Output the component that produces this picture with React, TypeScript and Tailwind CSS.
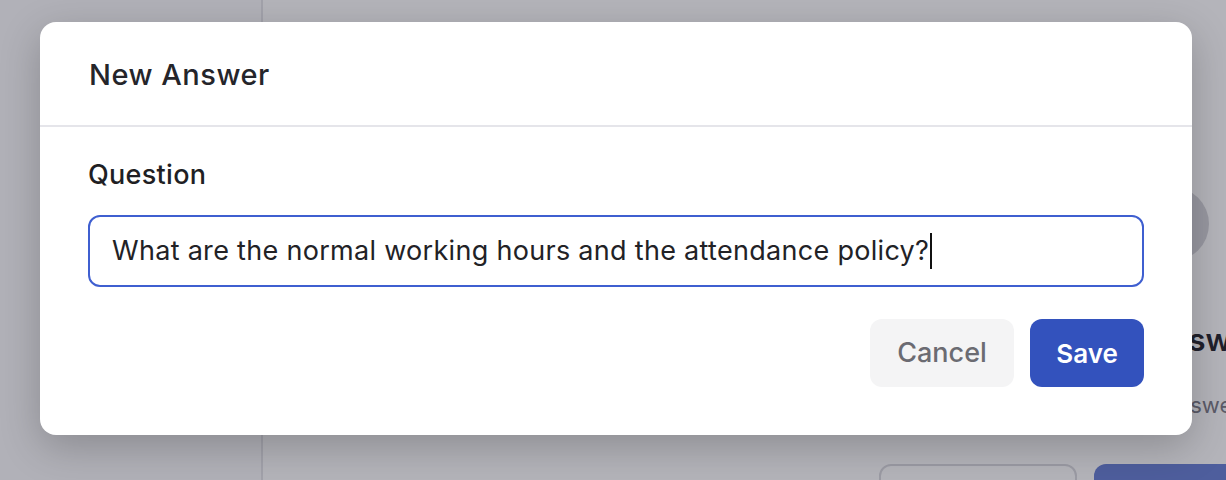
import React from 'react';

const font = { fontFamily: 'Inter, "Noto Sans", sans-serif' };

const BackgroundPage = () => (
  <div className="flex h-[480px] w-full bg-white">
    <aside className="w-[263px] shrink-0 border-r-2 border-[#e6e6ea] bg-[#fbfbfc]" />
    <main className="flex flex-1 flex-col pl-[616px] pt-[187px]">
      <div className="ml-[256px] h-[74px] w-[74px] shrink-0 rounded-full bg-[#d7d7dc]" />
      <h2 className="ml-[268px] mt-[59px] shrink-0 whitespace-nowrap text-[31px] font-semibold leading-[40px] text-[#2b2b33]">
        Answers
      </h2>
      <p className="ml-[283px] mt-[30px] shrink-0 whitespace-nowrap text-[22px] leading-[30px] text-[#80808a]">
        Answers appear here
      </p>
      <div className="mt-[44px] flex shrink-0 gap-[17px]">
        <div className="h-[56px] w-[198px] rounded-[12px] border-2 border-[#dcdce0] bg-white" />
        <div className="h-[56px] w-[200px] rounded-[12px] bg-[#6e84d6]" />
      </div>
    </main>
  </div>
);

export default function App() {
  return (
    <div className="relative h-[480px] w-[1226px] overflow-hidden" style={font}>
      <BackgroundPage />

      <div className="absolute inset-0 bg-[rgba(8,6,26,0.3)]" />

      <div className="absolute left-[40px] top-[22px] w-[1152px] overflow-hidden rounded-[16px] bg-white shadow-[0_12px_40px_rgba(0,0,0,0.22)]">
        <div className="flex h-[105px] items-center border-b-2 border-[#e5e5ea] px-[49px] pt-[3px]">
          <h1 className="text-[29px] font-medium tracking-[0.5px] text-[#25252a]">New Answer</h1>
        </div>

        <div className="px-[48px] pb-[48px] pt-[31px]">
          <label className="block text-[27px] font-medium leading-[34px] tracking-[0.3px] text-[#1f1f24]">
            Question
          </label>

          <div className="mt-[23px] flex h-[72px] items-center rounded-[12px] border-2 border-[#3f5fd0] px-[22px]">
            <span className="text-[27px] leading-[34px] tracking-[0.3px] text-[#222226]">
              What are the normal working hours and the attendance policy?
            </span>
            <span className="ml-[1px] h-[36px] w-[2px] bg-[#111]" />
          </div>

          <div className="mt-[32px] flex justify-end gap-[16px]">
            <button className="h-[68px] w-[144px] rounded-[12px] bg-[#f4f4f5] text-[27px] font-medium text-[#6b6b72]">
              Cancel
            </button>
            <button className="h-[68px] w-[114px] rounded-[12px] bg-[#3352bd] text-[26px] font-semibold text-white">
              Save
            </button>
          </div>
        </div>
      </div>
    </div>
  );
}
